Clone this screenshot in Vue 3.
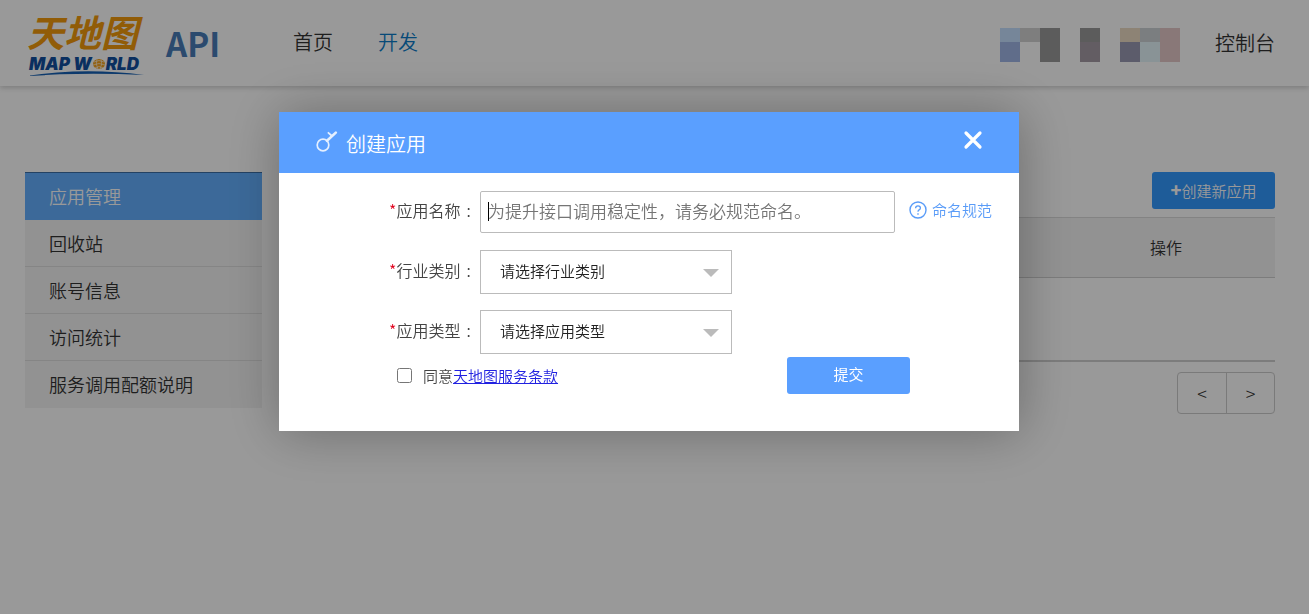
<script setup>
import { ref } from 'vue'

const menuItems = ['应用管理', '回收站', '账号信息', '访问统计', '服务调用配额说明']
const activeItem = ref('应用管理')

const dialogOpen = ref(true)
const appName = ref('')
const industry = ref('')
const appType = ref('')
const agreed = ref(false)

// 用户名马赛克色块
const mosaic = [
  { x: 0, y: 0, w: 20, h: 14, c: '#c5e0ff' },
  { x: 0, y: 14, w: 20, h: 20, c: '#a0b6e6' },
  { x: 20, y: 0, w: 20, h: 14, c: '#d2d2d2' },
  { x: 40, y: 0, w: 20, h: 34, c: '#9a9a9a' },
  { x: 80, y: 0, w: 20, h: 14, c: '#9a9a9a' },
  { x: 80, y: 14, w: 20, h: 20, c: '#a69ba6' },
  { x: 120, y: 0, w: 20, h: 14, c: '#ebdac4' },
  { x: 120, y: 14, w: 20, h: 20, c: '#9a9ab2' },
  { x: 140, y: 0, w: 20, h: 14, c: '#ced2d6' },
  { x: 140, y: 14, w: 20, h: 20, c: '#e4f6fa' },
  { x: 160, y: 0, w: 20, h: 34, c: '#e4c8c8' }
]
</script>

<template>
  <div class="page">
    <header class="top-bar">
      <a href="#" class="brand">
        <span class="logo">
          <span class="logo-cn">天地图</span>
          <span class="logo-en">
            MAP W<svg class="globe" viewBox="0 0 14 12" width="14" height="12">
              <ellipse cx="7" cy="6" rx="6" ry="5" fill="#f5a21b" />
              <path d="M2 4 Q7 1 12 4 M1 7 Q7 4 13 7 M3 10 Q7 7 11 10 M5 1 Q3 6 6 11 M9 1 Q11 6 8 11" fill="none" stroke="#fff" stroke-width="0.6" />
            </svg>RLD
          </span>
          <svg class="swoosh" viewBox="0 0 118 5" width="118" height="5">
            <path d="M0 5 Q59 -4 118 4 Q59 1 0 5Z" fill="#1560b4" />
          </svg>
        </span>
        <span class="brand-api">API</span>
      </a>
      <nav class="nav">
        <a href="#">首页</a>
        <a href="#" class="current">开发</a>
      </nav>
      <div class="account">
        <svg class="user-name" viewBox="0 0 180 34" width="180" height="34" shape-rendering="crispEdges">
          <rect v-for="(b, i) in mosaic" :key="i" :x="b.x" :y="b.y" :width="b.w" :height="b.h" :fill="b.c" />
        </svg>
        <a href="#">控制台</a>
      </div>
    </header>

    <div class="content">
      <ul class="side-menu">
        <li v-for="item in menuItems" :key="item">
          <a href="#" :class="{ active: activeItem === item }" @click.prevent="activeItem = item">{{ item }}</a>
        </li>
      </ul>

      <main class="main">
        <button type="button" class="btn-create" @click="dialogOpen = true"><b>+</b>创建新应用</button>
        <table class="app-table">
          <thead>
            <tr>
              <th></th>
              <th class="col-action">操作</th>
            </tr>
          </thead>
          <tbody>
            <tr>
              <td></td>
              <td></td>
            </tr>
          </tbody>
        </table>
        <div class="pager">
          <button type="button">&lt;</button>
          <button type="button">&gt;</button>
        </div>
      </main>
    </div>

    <!-- 创建应用弹窗 -->
    <div v-if="dialogOpen" class="overlay">
      <section class="dialog" role="dialog" aria-labelledby="dialog-title">
        <div class="dialog-header">
          <svg class="key-icon" viewBox="0 0 22 22" width="22" height="22" fill="none" stroke="#e4efff" stroke-linecap="round">
            <circle cx="7" cy="14" r="5.8" stroke-width="1.7" />
            <path d="M11 9.8 L19.8 1.6" stroke-width="2.6" />
            <path d="M12.4 1.8 L16 5" stroke-width="1.8" />
          </svg>
          <h2 id="dialog-title">创建应用</h2>
          <button type="button" class="btn-close" aria-label="关闭" @click="dialogOpen = false">
            <svg viewBox="0 0 20 20" width="20" height="20">
              <path d="M3 3 L17 17 M17 3 L3 17" stroke="#fff" stroke-width="3.2" stroke-linecap="round" />
            </svg>
          </button>
        </div>

        <form class="dialog-body" @submit.prevent>
          <div class="form-row">
            <label for="app-name"><i>*</i>应用名称<span class="colon">:</span></label>
            <div class="text-box">
              <input id="app-name" v-model="appName" type="text" placeholder="为提升接口调用稳定性，请务必规范命名。">
              <span class="caret"></span>
            </div>
            <a href="#" class="help">
              <svg viewBox="0 0 18 18" width="18" height="18" fill="none" stroke="#5a9cf8">
                <circle cx="9" cy="9" r="8" stroke-width="1.4" />
                <path d="M6.6 7.2 Q6.6 4.8 9 4.8 Q11.4 4.8 11.4 7 Q11.4 8.2 10.1 8.9 Q9 9.5 9 10.8" stroke-width="1.3" />
                <path d="M9 12.2 V13.8" stroke-width="1.4" />
              </svg>
              <span>命名规范</span>
            </a>
          </div>
          <div class="form-row">
            <label for="industry"><i>*</i>行业类别<span class="colon">:</span></label>
            <div class="select-box">
              <select id="industry" v-model="industry">
                <option value="">请选择行业类别</option>
              </select>
            </div>
          </div>
          <div class="form-row">
            <label for="app-type"><i>*</i>应用类型<span class="colon">:</span></label>
            <div class="select-box">
              <select id="app-type" v-model="appType">
                <option value="">请选择应用类型</option>
              </select>
            </div>
          </div>
          <div class="form-footer">
            <div class="agree">
              <input id="agree" v-model="agreed" type="checkbox">
              <label for="agree">同意</label><a href="#">天地图服务条款</a>
            </div>
            <button type="submit" class="btn-submit">提交</button>
          </div>
        </form>
      </section>
    </div>
  </div>
</template>

<style>
body {
  margin: 0;
  background: #fff;
}
</style>

<style scoped>
.page {
  min-height: 100vh;
  font-family: "Noto Sans CJK SC", sans-serif;
  font-weight: 350;
  color: #333;
}

.page * {
  box-sizing: border-box;
}

a {
  color: inherit;
  text-decoration: none;
}

button,
input,
select {
  font-family: inherit;
  font-weight: inherit;
}

/* 顶部导航 */
.top-bar {
  display: flex;
  align-items: center;
  height: 86px;
  padding: 0 34px 0 26px;
  box-shadow: 0 2px 5px rgba(0, 0, 0, 0.18);
}

.brand {
  display: flex;
  align-items: center;
  gap: 22px;
  width: 267px;
}

.logo {
  display: flex;
  flex-direction: column;
  width: 118px;
}

.logo-cn {
  padding: 0 0 6px 1px;
  font-size: 37px;
  font-weight: 700;
  font-style: italic;
  line-height: 40px;
  color: #f29a0c;
}

.logo-en {
  display: flex;
  align-items: center;
  padding-left: 3px;
  font-family: Inter, "Liberation Sans", sans-serif;
  font-size: 17px;
  font-weight: 900;
  font-style: italic;
  line-height: 14px;
  white-space: nowrap;
  color: #114f9e;
}

.swoosh {
  display: block;
}

.brand-api {
  font-size: 33px;
  font-weight: 700;
  line-height: 40px;
  color: #487cb8;
}

.nav {
  display: flex;
  gap: 45px;
  padding-bottom: 2px;
  font-size: 20px;
  line-height: 30px;
}

.nav .current {
  color: #0d7cc9;
}

.account {
  display: flex;
  align-items: center;
  gap: 35px;
  margin-left: auto;
  font-size: 20px;
  line-height: 30px;
}

.user-name {
  margin-top: 4px;
}

/* 内容区 */
.content {
  display: flex;
  align-items: flex-start;
  gap: 24px;
  padding: 86px 34px 40px 25px;
}

.side-menu {
  width: 237px;
  margin: 0;
  padding: 0;
  list-style: none;
  border-top: 1px solid #3c6ea5;
  background: #f3f3f3;
}

.side-menu a {
  display: block;
  height: 47px;
  padding-left: 24px;
  border-bottom: 1px solid #dedede;
  font-size: 18px;
  line-height: 46px;
}

.side-menu li:last-child a {
  border-bottom: none;
}

.side-menu a.active {
  background: #64b0ff;
  border-color: #64b0ff;
  color: #fff;
}

.main {
  display: flex;
  flex: 1;
  flex-direction: column;
  align-items: flex-end;
}

.btn-create {
  width: 123px;
  height: 37px;
  padding: 0;
  border: none;
  border-radius: 3px;
  background: #3399ff;
  color: #fff;
  font-size: 15px;
}

.btn-create b {
  font-size: 18px;
  font-weight: 900;
  line-height: 15px;
}

.app-table {
  width: 100%;
  margin: 8px 0 10px;
  border-collapse: collapse;
}

.app-table th {
  height: 60px;
  padding: 0 0 2px;
  border-top: 1px solid #dadada;
  border-bottom: 1px solid #cfcfcf;
  background: #f3f3f3;
  font-size: 16px;
  font-weight: inherit;
}

.app-table .col-action {
  width: 218px;
}

.app-table td {
  height: 83px;
  padding: 0;
  border-bottom: 2px solid #cfcfcf;
}

.pager {
  display: flex;
  border: 1px solid #ccc;
  border-radius: 4px;
}

.pager button {
  width: 48px;
  height: 40px;
  padding: 0;
  border: none;
  background: none;
  color: #333;
  font-size: 18px;
  font-weight: 300;
}

.pager button + button {
  border-left: 1px solid #ccc;
}

/* 弹窗 */
.overlay {
  position: fixed;
  inset: 0;
  display: flex;
  align-items: flex-start;
  justify-content: center;
  padding: 112px 11px 0 0;
  background: rgba(0, 0, 0, 0.4);
}

.dialog {
  width: 740px;
  background: #fff;
  box-shadow: 1px 1px 50px rgba(0, 0, 0, 0.3);
}

.dialog-header {
  display: flex;
  align-items: center;
  height: 61px;
  padding: 0 36px 0 37px;
  background: #5a9fff;
  color: #fff;
}

.key-icon {
  margin-bottom: 2px;
}

.dialog-header h2 {
  flex: 1;
  margin: 2px 0 0 8px;
  font-size: 20px;
  font-weight: inherit;
  line-height: 30px;
}

.btn-close {
  display: flex;
  padding: 0;
  margin-bottom: 6px;
  border: none;
  background: none;
}

.dialog-body {
  display: flex;
  flex-direction: column;
  gap: 16px;
  padding: 17px 27px 37px 110px;
  color: #444;
}

.form-row {
  display: flex;
  align-items: center;
  height: 44px;
}

.form-row label {
  width: 91px;
  padding-bottom: 4px;
  font-size: 16px;
}

.form-row label i {
  font-style: normal;
  color: #e0001b;
}

.colon {
  margin-left: 6px;
}

.text-box {
  position: relative;
  width: 415px;
}

.text-box input {
  display: block;
  width: 100%;
  height: 42px;
  padding: 0 7px 4px;
  border: 1px solid #bbb;
  border-radius: 2px;
  outline: none;
  font-size: 17px;
  color: #333;
}

.text-box input::placeholder {
  color: #757575;
}

.caret {
  position: absolute;
  top: 11px;
  left: 8px;
  width: 1px;
  height: 19px;
  background: #000;
}

.help {
  display: flex;
  align-items: center;
  gap: 5px;
  margin-left: 14px;
  padding-bottom: 4px;
  font-size: 15px;
  white-space: nowrap;
  color: #5a9cf8;
}

.help span {
  padding-bottom: 2px;
}

.select-box {
  position: relative;
  width: 252px;
}

.select-box::after {
  content: "";
  position: absolute;
  top: 19px;
  right: 13px;
  border: 8px solid transparent;
  border-top-color: #bbb;
  border-bottom: none;
  pointer-events: none;
}

.select-box select {
  display: block;
  width: 100%;
  height: 44px;
  padding: 0 32px 3px 19px;
  border: 1px solid #bbb;
  border-radius: 0;
  background: #fff;
  appearance: none;
  font-size: 15px;
  color: #222;
}

.form-footer {
  display: flex;
  align-items: center;
  justify-content: space-between;
  margin-top: -13px;
  padding: 0 82px 0 8px;
}

.agree {
  display: flex;
  align-items: center;
  font-size: 15px;
  line-height: 22px;
}

.agree input {
  width: 15px;
  height: 15px;
  margin: 0 11px 0 0;
}

.agree a {
  color: #2121e0;
  text-decoration: underline;
}

.btn-submit {
  width: 123px;
  height: 37px;
  padding: 0 0 4px;
  border: none;
  border-radius: 3px;
  background: #5a9fff;
  color: #fff;
  font-size: 15px;
  font-weight: 400;
}
</style>
